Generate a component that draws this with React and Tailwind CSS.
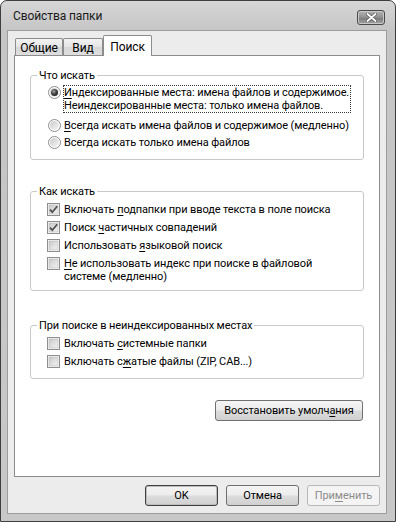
import React from 'react';

function U({ children }) {
  return <span className="underline decoration-1 underline-offset-[2px]">{children}</span>;
}

function Radio({ checked }) {
  return (
    <svg width="13" height="13" viewBox="0 0 13 13" className="shrink-0">
      <defs>
        <linearGradient id="rg" x1="0" y1="0" x2="1" y2="1">
          <stop offset="0" stopColor="#c9c9c9" />
          <stop offset="1" stopColor="#f7f7f7" />
        </linearGradient>
        <radialGradient id="rd" cx="0.4" cy="0.35" r="0.7">
          <stop offset="0" stopColor="#a0a0a0" />
          <stop offset="0.6" stopColor="#3c3c3c" />
          <stop offset="1" stopColor="#222" />
        </radialGradient>
      </defs>
      <circle cx="6.5" cy="6.5" r="6" fill="#fff" stroke="#8c8c8c" />
      <circle cx="6.5" cy="6.5" r="4.5" fill="url(#rg)" />
      {checked && <circle cx="6.5" cy="6.5" r="3.5" fill="url(#rd)" />}
    </svg>
  );
}

function Check({ checked }) {
  return (
    <svg width="13" height="13" viewBox="0 0 13 13" className="shrink-0">
      <defs>
        <linearGradient id="cg" x1="0" y1="0" x2="1" y2="1">
          <stop offset="0" stopColor="#c8c8c8" />
          <stop offset="1" stopColor="#f4f4f4" />
        </linearGradient>
      </defs>
      <rect x="0.5" y="0.5" width="12" height="12" fill="#fff" stroke="#8e8e8e" />
      <rect x="2" y="2" width="9" height="9" fill="url(#cg)" stroke="#b4b4b4" strokeWidth="0.6" />
      {checked && (
        <path d="M3 6.6 L5.3 9.2 L10.2 3.2" fill="none" stroke="#505050" strokeWidth="1.8" />
      )}
    </svg>
  );
}

function Btn({ children, className = '', def, disabled }) {
  let look = 'border-[#707070] bg-[linear-gradient(#f4f4f4_0%,#ececec_48%,#dcdcdc_52%,#d0d0d0_100%)] text-black';
  if (def) look = 'border-[#3f3f3f] bg-[linear-gradient(#f4f4f4_0%,#ececec_48%,#dcdcdc_52%,#d0d0d0_100%)] text-black shadow-[inset_0_0_0_1px_#bdbdbd]';
  if (disabled) look = 'border-[#b8b8b8] bg-[#f4f4f4] text-[#8c8c8c]';
  return (
    <div className={`flex h-[21px] items-center justify-center whitespace-nowrap rounded-[3px] border leading-none ${look} ${className}`}>
      {children}
    </div>
  );
}

function Group({ title, children, className = '' }) {
  return (
    <fieldset className={`rounded-[3px] border border-[#c9c9c9] p-0 ${className}`}>
      <legend className="ml-[6px] px-[2px] leading-[15px]">{title}</legend>
      {children}
    </fieldset>
  );
}

function CheckRow({ checked, children }) {
  return (
    <div className="flex items-start gap-[4px]">
      <Check checked={checked} />
      <span className="whitespace-nowrap leading-[13px]">{children}</span>
    </div>
  );
}

export default function App() {
  return (
    <div className="h-[522px] w-[396px] overflow-hidden bg-white font-['Roboto',sans-serif] text-[11px] tracking-[-0.1px] text-black">
      <div className="flex h-[522px] w-[396px] flex-col rounded-t-[7px] border border-[#3e3e3e] bg-[linear-gradient(#d6d6d6,#c5c5c5_30px,#c8c8c8)] pb-[7px] pl-[6px] pr-[8px]">
        <div className="flex h-[29px] shrink-0 items-start justify-between">
          <div className="mt-[8px] pl-[6px] text-[12px] leading-[15px] text-[#1a1a1a]">Свойства папки</div>
          <div className="mr-[2px] mt-[9px] flex h-[15px] w-[28px] items-center justify-center rounded-[3px] border border-[#4a4a4a] bg-[linear-gradient(#b4b4b4,#8f8f8f_50%,#7c7c7c_55%,#a4a4a4)] shadow-[inset_0_0_0_1px_#c8c8c8]">
            <svg width="11" height="9" viewBox="0 0 11 9">
              <path d="M1.5 1 L9.5 8 M9.5 1 L1.5 8" stroke="#5a5a5a" strokeWidth="3.4" strokeLinecap="round" />
              <path d="M1.5 1 L9.5 8 M9.5 1 L1.5 8" stroke="#fff" strokeWidth="1.8" strokeLinecap="round" />
            </svg>
          </div>
        </div>

        <div className="flex h-[484px] flex-col border border-[#9c9c9c] bg-[#ececec] px-[6px] pt-[4px]">
          <div className="flex h-[20px] items-end pl-[1px] text-[12px]">
            <div className="flex h-[17px] w-[48px] items-center justify-center rounded-t-[2px] border border-b-0 border-[#8c8c8c] bg-[linear-gradient(#f3f3f3,#e4e4e4_50%,#d8d8d8_50%,#dedede)] pt-[1px]">
              Общие
            </div>
            <div className="flex h-[17px] w-[40px] items-center justify-center rounded-t-[2px] border border-b-0 border-[#8c8c8c] bg-[linear-gradient(#f3f3f3,#e4e4e4_50%,#d8d8d8_50%,#dedede)] pt-[1px]">
              Вид
            </div>
            <div className="relative z-10 -mb-px flex h-[21px] w-[49px] items-start justify-center rounded-t-[2px] border border-b-0 border-[#8c8c8c] bg-white pt-[2px]">
              Поиск
            </div>
          </div>

          <div className="flex h-[422px] flex-col border border-[#8c8c8c] bg-white px-[15px]">
            <Group title="Что искать" className="mt-[12px]">
              <div className="flex flex-col pb-[10px] pl-[17px]">
                <div className="mt-[2px] flex items-start gap-[2px]">
                  <span className="mt-[1px]">
                    <Radio checked />
                  </span>
                  <div className="whitespace-nowrap border border-dotted border-[#3a3a3a] pr-[1px] leading-[13px]">
                    <div>
                      <U>И</U>ндексированные места: имена файлов и содержимое.
                    </div>
                    <div>Неиндексированные места: только имена файлов.</div>
                  </div>
                </div>
                <div className="mt-[6px] flex items-start gap-[3px] whitespace-nowrap leading-[13px]">
                  <Radio />
                  <span>
                    <U>В</U>сегда искать имена файлов и содержимое (медленно)
                  </span>
                </div>
                <div className="mt-[4px] flex items-start gap-[3px] whitespace-nowrap leading-[13px]">
                  <Radio />
                  <span>Всегда искать только имена файлов</span>
                </div>
              </div>
            </Group>

            <Group title="Как искать" className="mt-[24px]">
              <div className="mt-[4px] flex flex-col gap-[5px] pb-[7px] pl-[16px]">
                <CheckRow checked>
                  Включать <U>п</U>одпапки при вводе текста в поле поиска
                </CheckRow>
                <CheckRow checked>
                  Поиск <U>ч</U>астичных совпадений
                </CheckRow>
                <CheckRow>
                  Использовать <U>я</U>зыковой поиск
                </CheckRow>
                <CheckRow>
                  <U>Н</U>е использовать индекс при поиске в файловой
                  <br />
                  системе (медленно)
                </CheckRow>
              </div>
            </Group>

            <Group title="При поиске в неиндексированных местах" className="mt-[27px]">
              <div className="mt-[4px] flex flex-col gap-[5px] pb-[10px] pl-[16px]">
                <CheckRow>
                  Включать <U>с</U>истемные папки
                </CheckRow>
                <CheckRow>
                  Включать с<U>ж</U>атые файлы (ZIP, CAB...)
                </CheckRow>
              </div>
            </Group>

            <div className="mt-[21px] flex justify-end pr-[1px]">
              <Btn className="w-[148px]">
                <span>
                  Восстановить умолч<U>а</U>ния
                </span>
              </Btn>
            </div>
          </div>

          <div className="mt-[8px] flex justify-end gap-[8px]">
            <Btn def className="w-[73px]">
              OK
            </Btn>
            <Btn className="w-[73px]">Отмена</Btn>
            <Btn disabled className="w-[73px]">
              <span>
                При<U>м</U>енить
              </span>
            </Btn>
          </div>
        </div>
      </div>
    </div>
  );
}
